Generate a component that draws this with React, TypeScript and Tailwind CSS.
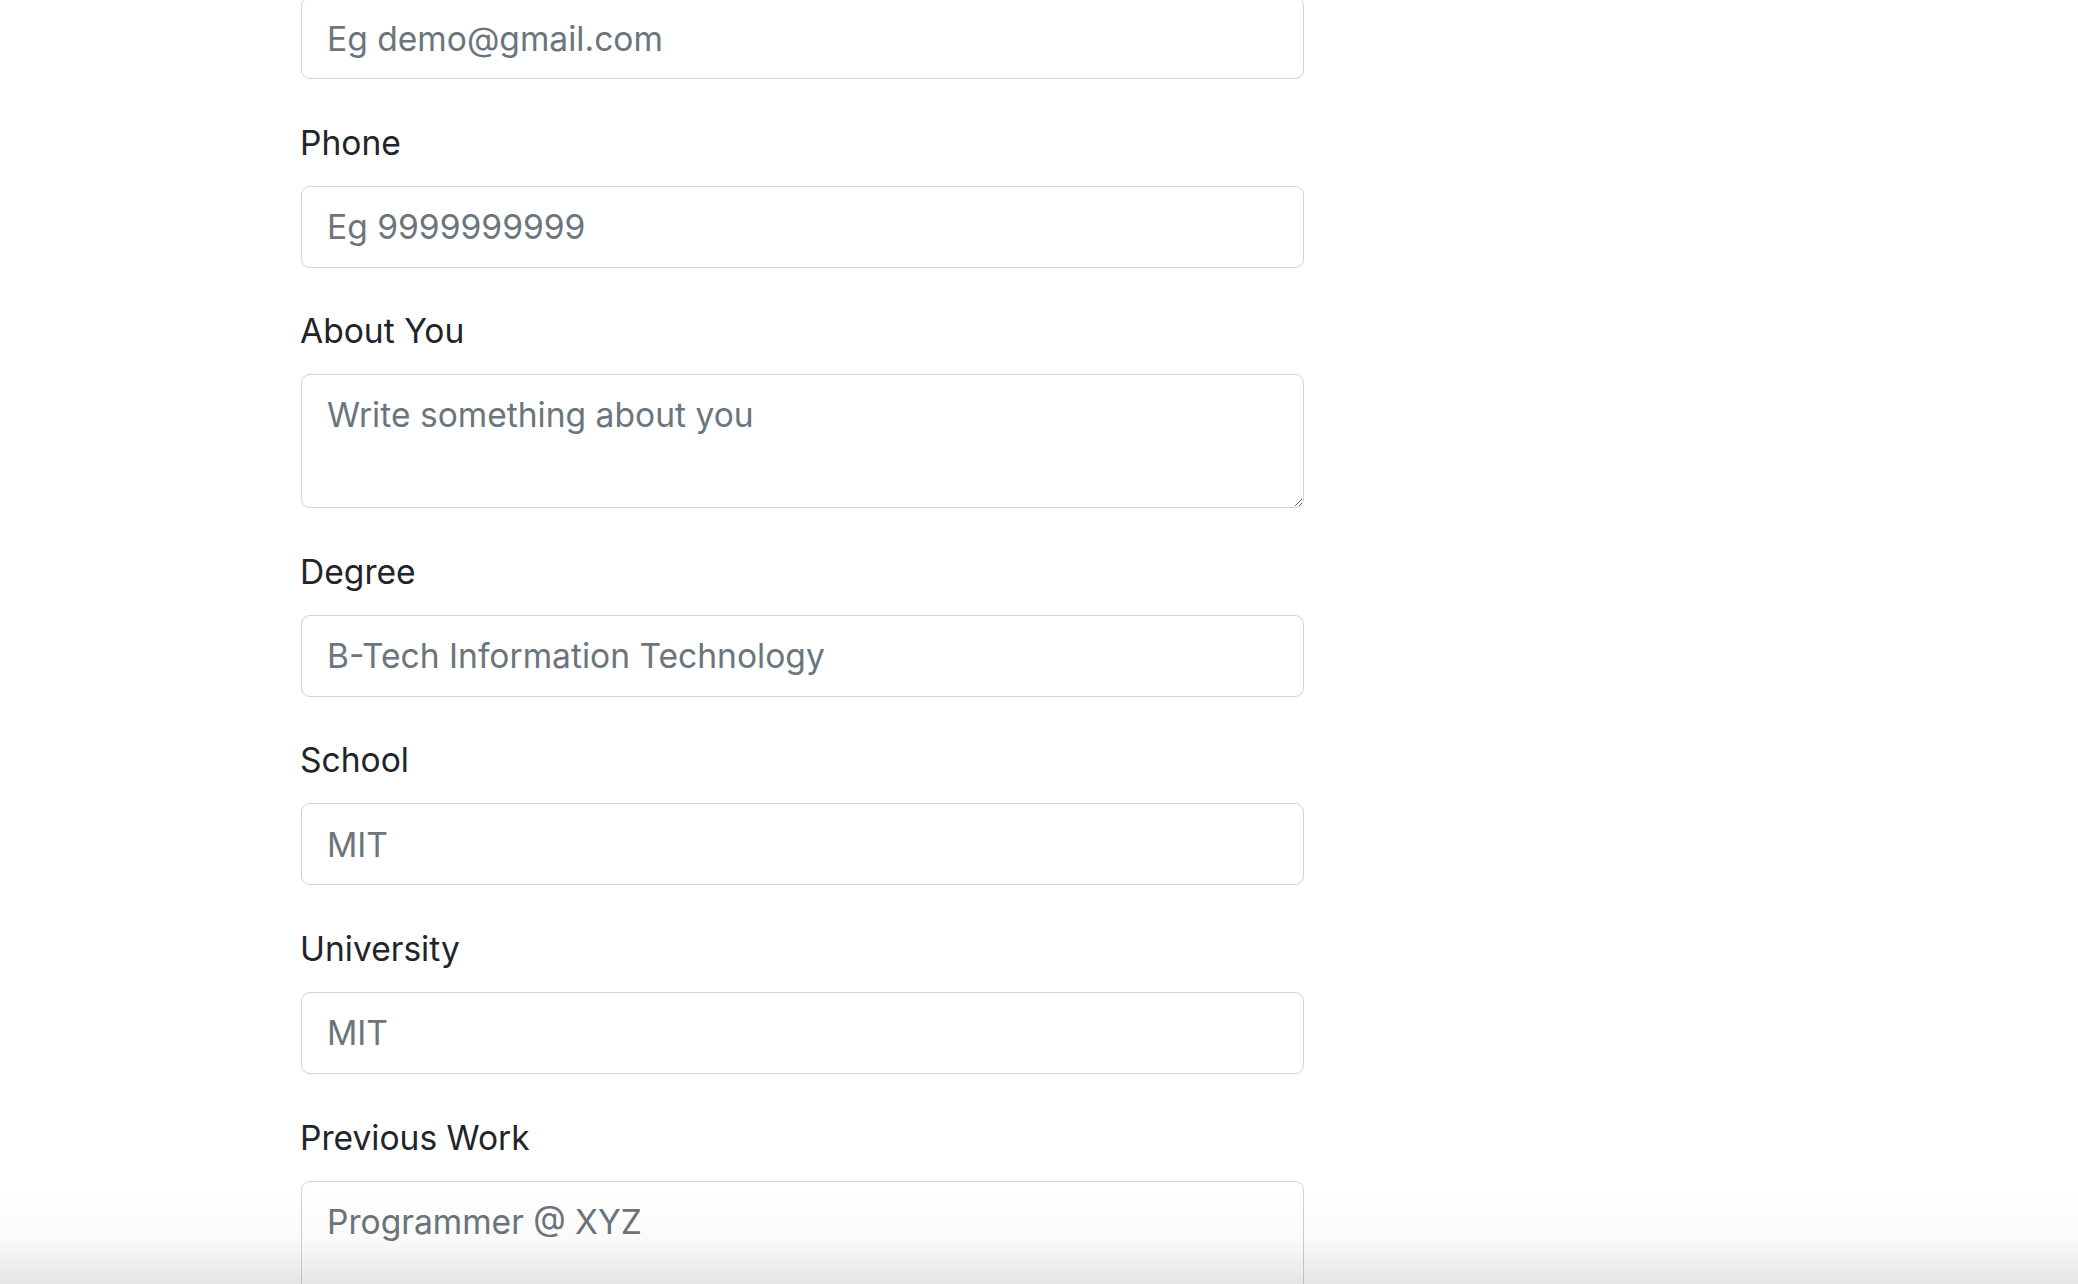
const fields = [
  { label: 'Phone', placeholder: 'Eg 9999999999' },
  { label: 'About You', placeholder: 'Write something about you', area: true },
  { label: 'Degree', placeholder: 'B-Tech Information Technology' },
  { label: 'School', placeholder: 'MIT' },
  { label: 'University', placeholder: 'MIT' },
  { label: 'Previous Work', placeholder: 'Programmer @ XYZ', area: true },
]

const inputCls =
  'block w-full rounded-[9px] border border-[#ced4da] bg-white px-[25px] py-[14px] text-[33.6px] leading-[51px] text-[#495057] placeholder:text-[#6c757d] outline-none'

export default function App() {
  return (
    <div
      className="relative h-[1284px] overflow-hidden bg-white text-[#212529]"
      style={{ fontFamily: 'Inter, "Liberation Sans", sans-serif' }}
    >
      <form className="ml-[301px] mt-[-3px] flex w-[1003px] flex-col">
        {/* Email (scrolled off the top) */}
        <div className="mb-[37.6px]">
          <input type="email" placeholder="Eg demo@gmail.com" className={inputCls + ' h-[82px]'} />
        </div>

        {fields.map((f) => (
          <div key={f.label} className="mb-[37.6px]">
            <label className="mb-[18px] -ml-[1px] block text-[33.6px] leading-[51px]">{f.label}</label>
            {f.area ? (
              <textarea placeholder={f.placeholder} className={inputCls + ' h-[134px] resize-y'} />
            ) : (
              <input type="text" placeholder={f.placeholder} className={inputCls + ' h-[82px]'} />
            )}
          </div>
        ))}
      </form>

      {/* bottom shadow from the fixed bar below */}
      <div className="pointer-events-none fixed inset-x-0 bottom-0 h-[90px] bg-gradient-to-b from-transparent via-black/[0.02] to-black/[0.1]" />
    </div>
  )
}
